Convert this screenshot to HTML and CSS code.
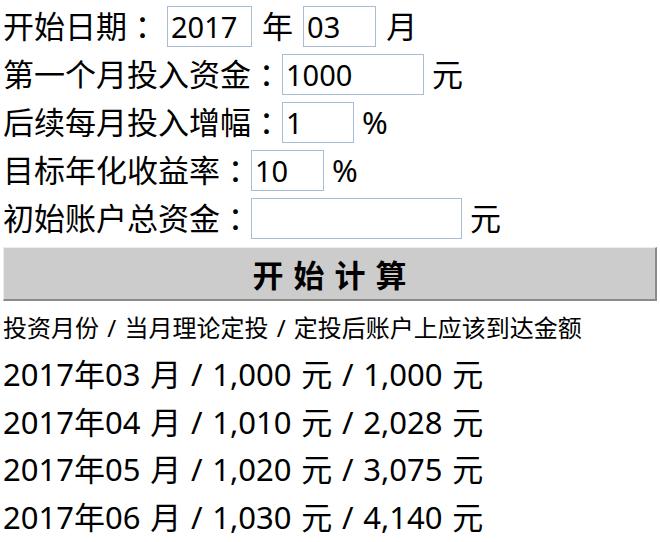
FILE: index.html
```html
<!DOCTYPE html>
<html lang="zh-CN">
<head>
<meta charset="utf-8">
<title>定投计算</title>
<link rel="stylesheet" href="styles.css">
</head>
<body>
<div class="page">
  <form class="form">
    <div class="row row-date">开始日期<span class="colon">： </span><input class="field w-year" value="2017"> 年 <input class="field w-month" value="03"> 月</div>
    <div class="row">第一个月投入资金<span class="colon">：</span><input class="field w-money" value="1000"> 元</div>
    <div class="row">后续每月投入增幅<span class="colon">：</span><input class="field w-pct" value="1"> %</div>
    <div class="row">目标年化收益率<span class="colon">：</span><input class="field w-pct2" value="10"> %</div>
    <div class="row">初始账户总资金<span class="colon">：</span><input class="field w-total" value=""> 元</div>
    <button type="button" class="calc">开始计算</button>
  </form>
  <div class="head">投资月份 / 当月理论定投 / 定投后账户上应该到达金额</div>
  <div class="results">
    <div class="res">2017年03 月 / 1,000 元 / 1,000 元</div>
    <div class="res">2017年04 月 / 1,010 元 / 2,028 元</div>
    <div class="res">2017年05 月 / 1,020 元 / 3,075 元</div>
    <div class="res">2017年06 月 / 1,030 元 / 4,140 元</div>
  </div>
</div>
</body>
</html>
```
FILE: styles.css
```css
html, body {
  margin: 0;
  padding: 0;
  background: #fff;
}
body {
  font-family: "Noto Sans", "Noto Sans CJK SC", sans-serif;
  color: #000;
}
.page {
  padding: 2px 3px 0 3px;
}
.form {
  margin: 0;
}
.row {
  height: 48px;
  line-height: 48px;
  font-size: 31px;
  white-space: pre;
  display: flex;
  align-items: center;
}
.row-date {
  word-spacing: 2px;
}
.colon {
  font-family: "Noto Sans CJK TC", sans-serif;
}
.field {
  box-sizing: border-box;
  height: 41px;
  border: 1px solid #a9bdd6;
  padding: 0 3px;
  margin: 0;
  font-family: "Noto Sans", "Noto Sans CJK SC", sans-serif;
  font-size: 29px;
  color: #000;
  background: #fff;
  outline: none;
}
.w-year { width: 85px; }
.w-month { width: 73px; }
.w-money { width: 142px; }
.w-pct { width: 72px; }
.w-pct2 { width: 73px; }
.w-total { width: 211px; }
.calc {
  display: block;
  box-sizing: border-box;
  width: 100%;
  height: 54px;
  margin: 5px 0 0 0;
  padding: 0 0 0 10px;
  background: #cccccc;
  border-style: solid;
  border-width: 1px 2px 2px 1px;
  border-color: #ececec #8a8a86 #8a8a86 #ececec;
  font-family: "Noto Sans CJK SC", sans-serif;
  font-weight: 700;
  font-size: 31px;
  letter-spacing: 10px;
  color: #000;
}
.head {
  margin-top: 9px;
  height: 36px;
  line-height: 36px;
  font-size: 24px;
  word-spacing: 2px;
}
.results {
  margin-top: 5px;
}
.res {
  height: 47.7px;
  line-height: 47.7px;
  font-size: 31px;
  white-space: pre;
  word-spacing: 1.7px;
}
```
